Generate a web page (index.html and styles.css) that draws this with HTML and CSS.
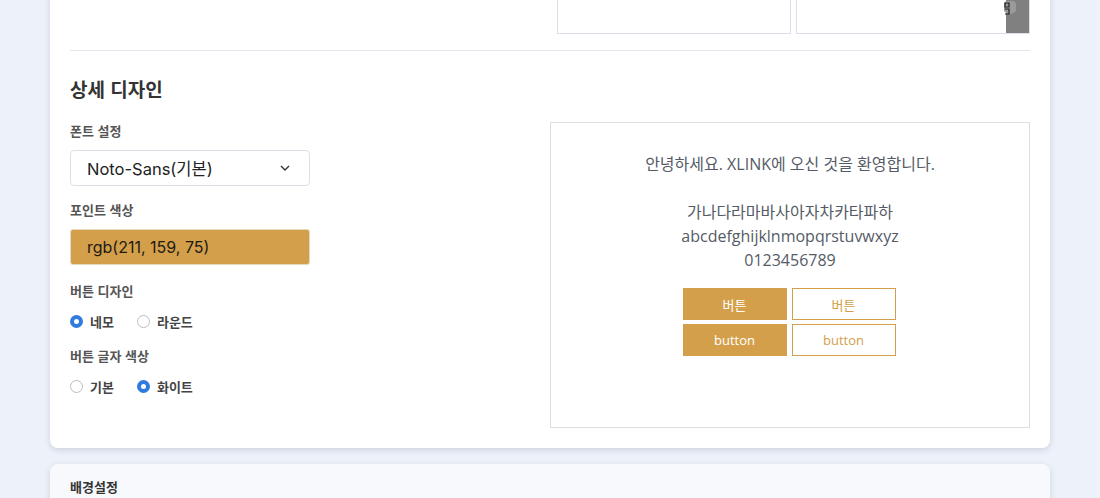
FILE: index.html
```html
<!DOCTYPE html>
<html lang="ko">
<head>
<meta charset="utf-8">
<link rel="stylesheet" href="styles.css">
</head>
<body>
<div class="page">
  <section class="card">
    <div class="thumbs">
      <div class="thumb"></div>
      <div class="thumb">
        <div class="strip">
          <svg class="strip-icon" width="12" height="18" viewBox="0 0 12 18"><circle cx="6" cy="6" r="7" fill="#9a9a9a"/><path d="M1 2h4v4H1zM1 8h4v5H1" fill="none" stroke="#222" stroke-width="1.2"/></svg>
        </div>
      </div>
    </div>
    <div class="divider"></div>
    <h3 class="title">상세 디자인</h3>
    <div class="grid">
      <div class="fields">
        <div class="field">
          <div class="label">폰트 설정</div>
          <div class="select">
            <span>Noto-Sans(기본)</span>
            <svg width="10" height="6" viewBox="0 0 10 6"><path d="M1 1l4 4 4-4" fill="none" stroke="#333" stroke-width="1.4"/></svg>
          </div>
        </div>
        <div class="field field-color">
          <div class="label">포인트 색상</div>
          <div class="color">rgb(211, 159, 75)</div>
        </div>
        <div class="field">
          <div class="label">버튼 디자인</div>
          <div class="radios">
            <span class="opt"><span class="radio checked"></span>네모</span>
            <span class="opt"><span class="radio"></span>라운드</span>
          </div>
        </div>
        <div class="field">
          <div class="label">버튼 글자 색상</div>
          <div class="radios">
            <span class="opt"><span class="radio"></span>기본</span>
            <span class="opt"><span class="radio checked"></span>화이트</span>
          </div>
        </div>
      </div>
      <div class="preview">
        <p class="line">안녕하세요. XLINK에 오신 것을 환영합니다.</p>
        <p class="line">&nbsp;</p>
        <p class="line">가나다라마바사아자차카타파하</p>
        <p class="line">abcdefghijklnmopqrstuvwxyz</p>
        <p class="line">0123456789</p>
        <div class="btns">
          <span class="btn fill">버튼</span>
          <span class="btn line-btn">버튼</span>
          <span class="btn fill">button</span>
          <span class="btn line-btn">button</span>
        </div>
      </div>
    </div>
  </section>
  <section class="card card2">
    <h4 class="subtitle">배경설정</h4>
  </section>
</div>
</body>
</html>
```

FILE: styles.css
```css
* { box-sizing: border-box; }
html, body { margin: 0; padding: 0; }
body {
  background: #edf1f9;
  font-family: "Noto Sans CJK KR", "Noto Sans", sans-serif;
  color: #333;
  overflow: hidden;
  height: 498px;
}
.page { padding: 0 50px; }
.card {
  background: #fff;
  border-radius: 8px;
  box-shadow: 0 2px 6px rgba(40, 50, 80, 0.16);
  margin-top: -40px;
  padding: 0 20px 20px;
}
.thumbs {
  display: flex;
  justify-content: flex-end;
  gap: 5px;
}
.thumb {
  width: 234px;
  height: 74px;
  border: 1px solid #dcdfea;
  background: #fff;
  display: flex;
  justify-content: flex-end;
}
.strip {
  width: 23px;
  height: 100%;
  background: #808080;
  position: relative;
}
.strip-icon { position: absolute; left: -2px; top: 40px; }
.divider {
  margin-top: 16px;
  height: 1px;
  background: #e2e5ed;
}
.title {
  margin: 25px 0 20px;
  font-size: 19px;
  line-height: 26px;
  font-weight: 700;
  color: #333;
}
.grid {
  display: grid;
  grid-template-columns: 1fr 480px;
  gap: 20px;
  align-items: start;
}
.fields { display: flex; flex-direction: column; }
.field { margin-bottom: 15px; }
.field-color { margin-bottom: 17px; }
.label {
  font-size: 13px;
  line-height: 18px;
  font-weight: 700;
  color: #555;
  margin-bottom: 10px;
}
.select {
  width: 240px;
  height: 36px;
  border: 1px solid #dcdfe6;
  border-radius: 4px;
  display: flex;
  align-items: center;
  justify-content: space-between;
  padding: 0 19px 0 16px;
  font-family: "Inter", "Noto Sans CJK KR", sans-serif;
  font-size: 16.5px;
  color: #222;
}
.color {
  width: 240px;
  height: 36px;
  border-radius: 3px;
  background: rgb(211, 159, 75);
  border: 1px solid #e6d9c2;
  display: flex;
  align-items: center;
  padding-left: 16px;
  font-family: "Inter", sans-serif;
  font-size: 16px;
  color: #1e1a14;
}
.radios {
  display: flex;
  align-items: center;
  height: 22px;
  font-size: 13px;
  font-weight: 700;
  color: #444;
}
.opt {
  display: inline-flex;
  align-items: center;
  margin-right: 23px;
}
.radio {
  width: 13px;
  height: 13px;
  border-radius: 50%;
  border: 1px solid #b9bcc4;
  background: #fff;
  margin-right: 7px;
}
.radio.checked {
  border: 4px solid #2f7be0;
}
.preview {
  height: 306px;
  border: 1px solid #dcdfe6;
  padding-top: 29px;
  text-align: center;
  font-family: "Open Sans", "Noto Sans CJK KR", sans-serif;
  color: #555b66;
}
.line {
  margin: 0;
  font-size: 16px;
  line-height: 24px;
}
.btns {
  margin: 16px auto 0;
  width: 213px;
  display: grid;
  grid-template-columns: 104px 104px;
  column-gap: 5px;
  row-gap: 4px;
  position: relative;
  left: -1px;
}
.btn {
  height: 32px;
  display: flex;
  align-items: center;
  justify-content: center;
  font-size: 13px;
}
.btn.fill {
  background: rgb(211, 159, 75);
  color: #fff;
}
.btn.line-btn {
  border: 1px solid rgb(211, 159, 75);
  color: rgb(211, 159, 75);
  background: #fff;
}
.card2 {
  margin-top: 16px;
  background: #f7f9fc;
  padding-top: 13px;
  height: 60px;
}
.subtitle {
  margin: 0;
  font-size: 13px;
  line-height: 20px;
  font-weight: 700;
  color: #333;
}
```
